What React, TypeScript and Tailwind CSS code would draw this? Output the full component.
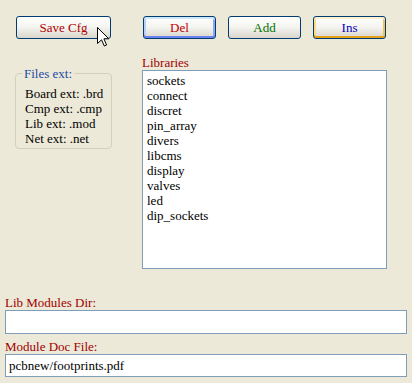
import type { ReactNode } from 'react';

const libraries = [
  'sockets',
  'connect',
  'discret',
  'pin_array',
  'divers',
  'libcms',
  'display',
  'valves',
  'led',
  'dip_sockets',
];

const extensions = ['Board ext: .brd', 'Cmp ext: .cmp', 'Lib ext: .mod', 'Net ext: .net'];

function XpButton({
  children,
  className,
  ring,
}: {
  children: ReactNode;
  className: string;
  ring?: 'focus' | 'hover';
}) {
  const ringClass =
    ring === 'focus'
      ? 'shadow-[inset_0_2px_0_#CEE7FF,inset_0_-2px_0_#6982EE,inset_2px_0_0_#B9D1FA,inset_-2px_0_0_#8DA6F0]'
      : ring === 'hover'
        ? 'shadow-[inset_0_2px_0_#FFF0CF,inset_0_-2px_0_#E5A01A,inset_2px_0_0_#FBD889,inset_-2px_0_0_#F4C155]'
        : '';
  return (
    <button
      type="button"
      className={`h-[23px] rounded-[3px] border border-[#003C74] bg-linear-to-b from-white via-[#F3F3EF] to-[#D9D5CA] text-[13px] leading-none ${ringClass} ${className}`}
    >
      {children}
    </button>
  );
}

export default function App() {
  return (
    <div
      className="relative w-[412px] h-[383px] bg-[#ECE9D8] text-[13px] text-black"
      style={{ fontFamily: '"Liberation Serif", "Times New Roman", serif' }}
    >
      {/* Toolbar buttons */}
      <div className="flex pt-[16px] pl-[16px]">
        <XpButton className="w-[95px] text-[#B00000]">Save Cfg</XpButton>
        <XpButton className="w-[73px] ml-[32px] text-[#C00000]" ring="focus">
          Del
        </XpButton>
        <XpButton className="w-[73px] ml-[12px] text-[#007000]">Add</XpButton>
        <XpButton className="w-[73px] ml-[12px] text-[#0000C0]" ring="hover">
          Ins
        </XpButton>
      </div>

      {/* Mouse cursor */}
      <svg
        className="absolute left-[97px] top-[27px]"
        width="13"
        height="20"
        viewBox="0 0 13 20"
      >
        <path
          d="M0.5 0.5 L0.5 16.5 L4.5 12.8 L7.3 19 L9.6 18 L6.9 11.8 L11.8 11.8 Z"
          fill="#fff"
          stroke="#000"
          strokeWidth="1"
          strokeLinejoin="miter"
        />
      </svg>

      {/* Middle section */}
      <div className="flex mt-[16px]">
        {/* Files ext group */}
        <div className="ml-[15px] mt-[18px] relative w-[97px] h-[76px] rounded-[4px] border border-[#D0D0BF]">
          <span className="absolute -top-[8px] left-[6px] px-[2px] bg-[#ECE9D8] leading-[15px] text-[#1E4BA8]">
            Files ext:
          </span>
          <div className="pt-[12px] pl-[9px]">
            {extensions.map((e) => (
              <div key={e} className="leading-[15px] whitespace-nowrap">
                {e}
              </div>
            ))}
          </div>
        </div>

        {/* Libraries list */}
        <div className="ml-[30px] flex flex-col">
          <div className="leading-[15px] text-[#A00000]">Libraries</div>
          <div className="w-[245px] h-[199px] border border-[#7F9DB9] bg-white pt-[2px] pl-[4px]">
            {libraries.map((l) => (
              <div key={l} className="leading-[15px]">
                {l}
              </div>
            ))}
          </div>
        </div>
      </div>

      {/* Path fields */}
      <div className="flex flex-col px-[5px] mt-[26px]">
        <div className="leading-[15px] text-[#A00000]">Lib Modules Dir:</div>
        <div className="h-[24px] border border-[#7F9DB9] bg-white" />
        <div className="mt-[5px] leading-[15px] text-[#A00000]">Module Doc File:</div>
        <div className="h-[23px] border border-[#7F9DB9] bg-white flex items-center pl-[3px] leading-none">
          pcbnew/footprints.pdf
        </div>
      </div>
    </div>
  );
}
